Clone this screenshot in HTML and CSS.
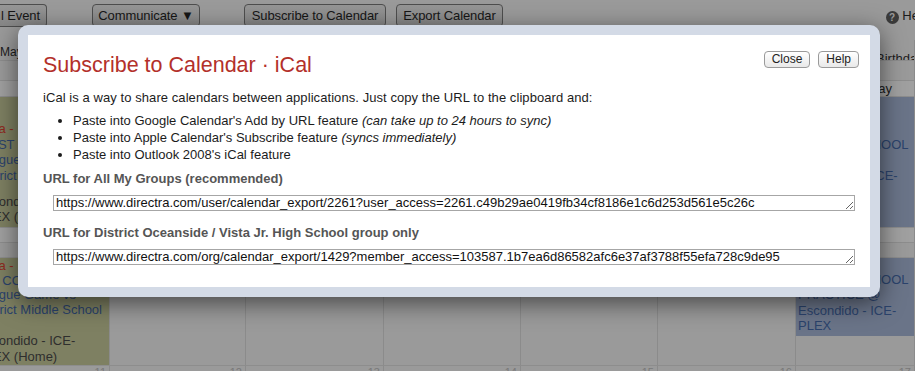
FILE: index.html
```html
<!DOCTYPE html>
<html>
  <head>
    <title>Calendar - Subscribe</title>
    <link rel="stylesheet" href="styles.css">
  </head>
  <body>
    <div class="toolbar">
      <span class="tbtn first">l Event</span>
      <span class="tbtn comm">Communicate &#9660;</span>
      <span class="tbtn subs">Subscribe to Calendar</span>
      <span class="tbtn export">Export Calendar</span>
      <span class="helplink"><span class="qmark">?</span> Help</span>
    </div>

    <div class="calendar">
      <div class="week">
        <div class="cell label"><span class="lbl-left">May</span></div>
        <div class="cell label"></div>
        <div class="cell label"></div>
        <div class="cell label"></div>
        <div class="cell label"></div>
        <div class="cell label"></div>
        <div class="cell label"><span class="lbl-right">Birthday</span></div>

        <div class="cell band"></div>
        <div class="cell band"></div>
        <div class="cell band"></div>
        <div class="cell band"></div>
        <div class="cell band"></div>
        <div class="cell band"></div>
        <div class="cell band"></div>

        <div class="cell thin"></div>
        <div class="cell thin"></div>
        <div class="cell thin"></div>
        <div class="cell thin"></div>
        <div class="cell thin"></div>
        <div class="cell thin"></div>
        <div class="cell thin"><span class="lbl-band">Today</span></div>

        <div class="cell events green">
          <p class="ev first-ev"><span class="red">Vista -</span><br>FIRST EVENT<br>League<br>District</p>
          <p class="ev place">Escondido<br>PLEX (</p>
        </div>
        <div class="cell events"></div>
        <div class="cell events"></div>
        <div class="cell events"></div>
        <div class="cell events"></div>
        <div class="cell events"></div>
        <div class="cell events blue">
          <p class="ev ev-right top">JR HIGH SCHOOL<br>PRACTICE @<br>Oceanside - ICE-</p>
        </div>
      </div>

      <div class="week">
        <div class="cell gap"></div>
        <div class="cell gap"></div>
        <div class="cell gap"></div>
        <div class="cell gap"></div>
        <div class="cell gap"></div>
        <div class="cell gap"></div>
        <div class="cell gap"></div>

        <div class="cell gap lower"></div>
        <div class="cell gap lower"></div>
        <div class="cell gap lower"></div>
        <div class="cell gap lower"></div>
        <div class="cell gap lower"></div>
        <div class="cell gap lower"></div>
        <div class="cell gap lower"></div>

        <div class="cell events2 green">
          <p class="ev second-ev"><span class="red">Vista -</span><br>ICE CON<br>League Game vs<br>District Middle School</p>
          <p class="ev place2">Escondido - ICE-<br>PLEX (Home)</p>
        </div>
        <div class="cell events2"></div>
        <div class="cell events2"></div>
        <div class="cell events2"></div>
        <div class="cell events2"></div>
        <div class="cell events2"></div>
        <div class="cell events2">
          <div class="blue block">
            <p class="ev ev-right">JR HIGH SCHOOL<br>PRACTICE @<br>Escondido - ICE-<br>PLEX</p>
          </div>
        </div>

        <div class="cell nums"><span>11</span></div>
        <div class="cell nums"><span>12</span></div>
        <div class="cell nums"><span>13</span></div>
        <div class="cell nums"><span>14</span></div>
        <div class="cell nums"><span>15</span></div>
        <div class="cell nums"><span>16</span></div>
        <div class="cell nums"><span>17</span></div>
      </div>
    </div>

    <div class="dialog">
      <div class="dialog-inner">
        <div class="dialog-head">
          <h2>Subscribe to Calendar &middot; iCal</h2>
          <div class="dialog-buttons">
            <button class="dbtn">Close</button>
            <button class="dbtn">Help</button>
          </div>
        </div>
        <p class="intro">iCal is a way to share calendars between applications. Just copy the URL to the clipboard and:</p>
        <ul class="steps">
          <li>Paste into Google Calendar's Add by URL feature <em>(can take up to 24 hours to sync)</em></li>
          <li>Paste into Apple Calendar's Subscribe feature <em>(syncs immediately)</em></li>
          <li>Paste into Outlook 2008's iCal feature</li>
        </ul>
        <p class="url-label">URL for All My Groups (recommended)</p>
        <textarea class="url" rows="1">https://www.directra.com/user/calendar_export/2261?user_access=2261.c49b29ae0419fb34cf8186e1c6d253d561e5c26c</textarea>
        <p class="url-label second">URL for District Oceanside / Vista Jr. High School group only</p>
        <textarea class="url" rows="1">https://www.directra.com/org/calendar_export/1429?member_access=103587.1b7ea6d86582afc6e37af3788f55efa728c9de95</textarea>
      </div>
    </div>
  </body>
</html>
```

FILE: styles.css
```css
body {
  margin: 0;
  background-color: rgb(154, 154, 154);
  font-family: "Liberation Sans", Helvetica, Arial, sans-serif;
  font-size: 13px;
  color: #1c1c1c;
  overflow: hidden;
  height: 371px;
}

/* toolbar behind the dialog */

.toolbar {
  height: 40px;
  display: flex;
  align-items: flex-start;
  padding-top: 4px;
  box-sizing: border-box;
}

.tbtn {
  display: inline-block;
  box-sizing: border-box;
  height: 23px;
  line-height: 21px;
  border: 1px solid rgb(78, 78, 78);
  border-radius: 4px;
  background: linear-gradient(rgb(150, 150, 150), rgb(134, 134, 134));
  color: rgb(22, 22, 22);
  font-size: 13px;
  letter-spacing: -0.1px;
  text-align: center;
  white-space: nowrap;
  overflow: hidden;
}

.tbtn.first {
  width: 47px;
  border-left: none;
  border-radius: 0 4px 4px 0;
  text-align: right;
  padding-right: 6px;
}

.tbtn.comm {
  width: 108px;
  margin-left: 45px;
}

.tbtn.subs {
  width: 142px;
  margin-left: 44px;
}

.tbtn.export {
  width: 107px;
  margin-left: 10px;
}

.helplink {
  margin-left: auto;
  margin-right: -14px;
  padding-top: 4px;
  color: rgb(28, 28, 28);
  white-space: nowrap;
}

.qmark {
  display: inline-block;
  width: 13px;
  height: 13px;
  line-height: 13px;
  border-radius: 50%;
  background-color: rgb(58, 58, 58);
  color: rgb(154, 154, 154);
  font-size: 10px;
  font-weight: bold;
  text-align: center;
  vertical-align: -1px;
}

/* calendar grid */

.week {
  display: grid;
  grid-template-columns: 110px 136px 138px 137px 137px 138px 1fr;
}

.cell {
  border-right: 1px solid rgb(139, 139, 139);
  border-bottom: 1px solid rgb(141, 141, 141);
  overflow: hidden;
  box-sizing: border-box;
}

.cell.label {
  height: 21px;
  white-space: nowrap;
}

.cell.band {
  height: 20px;
  white-space: nowrap;
}

.cell.thin {
  height: 16px;
  background-color: rgb(160, 160, 160);
  white-space: nowrap;
}

.cell.events {
  height: 131px;
}

.cell.gap {
  height: 15px;
  background-color: rgb(160, 160, 160);
}

.cell.gap.lower {
  background-color: rgb(154, 154, 154);
}

.cell.events2 {
  height: 108px;
}

.cell.nums {
  height: 20px;
  text-align: right;
  font-size: 11px;
  color: rgb(120, 120, 120);
  padding-right: 3px;
  border-bottom: none;
}

.lbl-left {
  display: block;
  padding-top: 5px;
  font-size: 12px;
}

.lbl-right {
  display: block;
  padding: 11px 0 0 80px;
}

.lbl-band {
  display: block;
  text-align: right;
  padding: 0 22px 0 0;
  line-height: 15px;
}

.green {
  background-color: rgb(126, 128, 98);
}

.blue {
  background-color: rgb(106, 116, 136);
}

.block {
  height: 78px;
}

.ev {
  margin: 0;
  color: rgb(43, 67, 108);
  line-height: 15.5px;
  white-space: nowrap;
  margin-left: -23px;
}

.first-ev {
  padding-top: 24px;
  line-height: 15.7px;
}

.place {
  margin-top: 10px;
  line-height: 15px;
  color: rgb(46, 46, 46);
}

.second-ev {
  padding-top: 1px;
  line-height: 14.7px;
}

.place2 {
  margin-top: 15px;
  line-height: 16px;
  color: rgb(46, 46, 46);
}

.ev-right {
  margin-left: 2px;
  padding-top: 14px;
  line-height: 15.3px;
  color: rgb(43, 67, 108);
}

.ev-right.top {
  padding-top: 40px;
}

.red {
  color: rgb(142, 42, 31);
}

/* the dialog over the page */

.dialog {
  position: absolute;
  left: 18px;
  top: 25px;
  width: 862px;
  height: 272px;
  box-sizing: border-box;
  padding: 10px;
  background-color: rgb(211, 218, 230);
  border-radius: 10px;
  box-shadow: 0 6px 24px rgba(0, 0, 0, 0.55);
}

.dialog-inner {
  background-color: #fff;
  height: 252px;
  box-sizing: border-box;
  padding: 16px 11px 0 15px;
}

.dialog-head {
  display: flex;
  justify-content: space-between;
  align-items: flex-start;
}

.dialog-head h2 {
  margin: 2px 0 0 0;
  font-size: 21.5px;
  line-height: 24px;
  font-weight: normal;
  color: rgb(179, 48, 42);
}

.dialog-buttons {
  display: flex;
  gap: 8px;
}

.dbtn {
  height: 17px;
  padding: 0 7px;
  font-family: "Liberation Sans", Helvetica, Arial, sans-serif;
  font-size: 12px;
  line-height: 15px;
  color: #222;
  background: linear-gradient(#ffffff, #e9e9e9);
  border: 1px solid rgb(154, 154, 154);
  border-radius: 4px;
}

.intro {
  margin: 12px 0 0 0;
  line-height: 17px;
  letter-spacing: 0.07px;
}

.steps {
  margin: 6px 0 0 0;
  padding-left: 30px;
  line-height: 17px;
}

.url-label {
  margin: 7px 0 0 0;
  line-height: 17px;
  font-weight: bold;
  color: rgb(85, 85, 85);
}

.url-label.second {
  margin-top: 13px;
}

.url {
  display: block;
  width: 802px;
  height: 16px;
  margin: 8px 0 0 10px;
  padding: 0 2px;
  box-sizing: border-box;
  border: 1px solid rgb(166, 166, 166);
  font-family: "Liberation Sans", Helvetica, Arial, sans-serif;
  font-size: 13px;
  line-height: 14px;
  color: #111;
  overflow: hidden;
  white-space: nowrap;
  resize: vertical;
}
```
